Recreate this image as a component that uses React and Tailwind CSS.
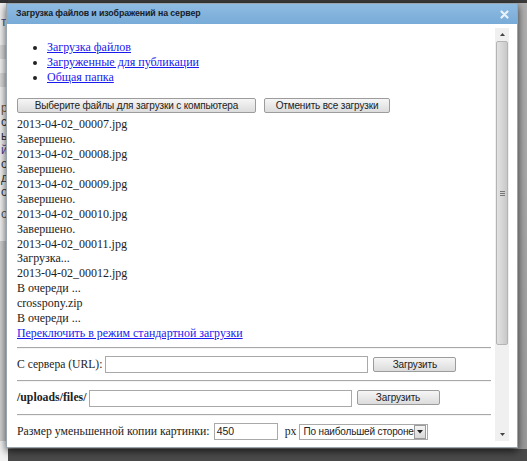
import React from "react";

const serif = { fontFamily: '"Liberation Serif", "Times New Roman", serif' };

function Btn({ w, children }) {
  return (
    <button
      className={`${w} h-[15px] shrink-0 rounded-[2px] border border-[#9c9c9c] bg-gradient-to-b from-[#f6f6f6] to-[#dcdcdc] text-[10px] tracking-[-0.15px] leading-[13px] text-[#222] font-['Liberation_Sans',Arial,sans-serif]`}
    >
      {children}
    </button>
  );
}

function Hr() {
  return <div className="h-px bg-[#a8a8a8] border-b border-[#f4f4f4] box-content" />;
}

export default function App() {
  const lines = [
    "2013-04-02_00007.jpg",
    "Завершено.",
    "2013-04-02_00008.jpg",
    "Завершено.",
    "2013-04-02_00009.jpg",
    "Завершено.",
    "2013-04-02_00010.jpg",
    "Завершено.",
    "2013-04-02_00011.jpg",
    "Загрузка...",
    "2013-04-02_00012.jpg",
    "В очереди ...",
    "crosspony.zip",
    "В очереди ...",
  ];
  return (
    <div className="relative w-[527px] h-[461px] overflow-hidden bg-[#8f8f8f]">
      {/* page behind */}
      <div className="flex h-full">
        <div className="w-[8px] h-full bg-[#f2f2f2] flex flex-col text-[12px] leading-[14px] overflow-hidden font-['Liberation_Sans',Arial,sans-serif] text-[#333]">
          <div className="h-[3px] bg-[#333] shrink-0" />
          <div className="mt-[12px] pl-[1px] text-[#4a4a9a]">т</div>
          <div className="mt-[16px] h-[14px] bg-[#dadada]" />
          <div className="mt-[14px] h-[14px] bg-[#dadada]" />
          <div className="mt-[14px] pl-[1px] text-[#7a5a20]">р</div>
          <div className="pl-[1px]">с</div>
          <div className="pl-[1px]">ь</div>
          <div className="pl-[1px] text-[#5a3a8a]">й</div>
          <div className="pl-[1px]">о</div>
          <div className="pl-[1px]">д</div>
          <div className="pl-[1px]">о</div>
          <div className="mt-[8px] pl-[1px] text-[#555]">о</div>
          <div className="mt-[20px] h-[200px] bg-[#cfcfcf]" />
        </div>
        <div className="flex-1 flex flex-col">
          <div className="h-[3px] bg-[#3a3a3a]" />
          <div className="flex-1 bg-gradient-to-b from-[#b0b0b0] to-[#9a9a9a]" />
          <div className="h-[12px] bg-[#4a4a4a]" />
        </div>
      </div>

      {/* dialog */}
      <div className="absolute left-[6px] top-[3px] w-[512px] h-[445px] bg-white border border-[#9aa4ad] shadow-[0_3px_8px_rgba(0,0,0,0.7)] flex flex-col">
        <div className="h-[20px] shrink-0 flex items-center justify-between bg-gradient-to-b from-[#8ebbe2] to-[#78abd8] pl-[9px] pr-[8px]">
          <span className="text-[8.8px] font-bold tracking-[-0.1px] text-[#16202a] font-['Liberation_Sans',Arial,sans-serif]">
            Загрузка файлов и изображений на сервер
          </span>
          <svg width="9" height="9" viewBox="0 0 9 9">
            <path d="M1.5 1.5 L7.5 7.5 M7.5 1.5 L1.5 7.5" stroke="#e8f2fb" strokeWidth="2.2" strokeLinecap="round" />
          </svg>
        </div>
        <div className="flex flex-1 min-h-0">
          <div className="flex-1 min-w-0 pl-[10px] pr-[4px] pt-[16px] overflow-hidden text-[#222]" style={serif}>
            <ul className="list-disc pl-[30px] text-[12px] leading-[14.75px]">
              <li><a className="text-[#1a1aee] underline">Загрузка файлов</a></li>
              <li><a className="text-[#1a1aee] underline">Загруженные для публикации</a></li>
              <li><a className="text-[#1a1aee] underline">Общая папка</a></li>
            </ul>
            <div className="flex gap-[8px] mt-[14px]">
              <Btn w="w-[239px]">Выберите файлы для загрузки с компьютера</Btn>
              <Btn w="w-[126px]">Отменить все загрузки</Btn>
            </div>
            <div className="mt-[4px] leading-[14.9px] text-[12px]">
              {lines.map((t, i) => (
                <div key={i}>{t}</div>
              ))}
              <div className="text-[11.9px]">
                <a className="text-[#1a1aee] underline">Переключить в режим стандартной загрузки</a>
              </div>
            </div>
            <div className="mt-[6px]"><Hr /></div>
            <div className="mt-[7px] flex items-center text-[11.6px]">
              <span>С сервера (URL):</span>
              <div className="ml-[3px] w-[263px] h-[17px] border border-[#a9a9a9] bg-white" />
              <div className="ml-[5px]"><Btn w="w-[83px]">Загрузить</Btn></div>
            </div>
            <div className="mt-[7px]"><Hr /></div>
            <div className="mt-[7px] flex items-center text-[11.8px]">
              <span className="font-bold">/uploads/files/</span>
              <div className="ml-[2px] w-[263px] h-[17px] border border-[#a9a9a9] bg-white" />
              <div className="ml-[5px]"><Btn w="w-[83px]">Загрузить</Btn></div>
            </div>
            <div className="mt-[7px]"><Hr /></div>
            <div className="mt-[7px] flex items-center text-[11.8px]">
              <span>Размер уменьшенной копии картинки:</span>
              <div className="ml-[4px] w-[64px] h-[17px] border border-[#a9a9a9] bg-white text-[10.5px] leading-[15px] pl-[2px] font-['Liberation_Sans',Arial,sans-serif]">450</div>
              <span className="ml-[7px]">px</span>
              <div className="ml-[3px] w-[129px] h-[16px] border border-[#a9a9a9] bg-white flex items-center font-['Liberation_Sans',Arial,sans-serif] text-[10px] tracking-[-0.15px]">
                <span className="flex-1 pl-[3px] whitespace-nowrap overflow-hidden">По наибольшей стороне</span>
                <div className="w-[12px] h-[14px] mr-px border border-[#9a9a9a] bg-gradient-to-b from-[#f4f4f4] to-[#d8d8d8] flex items-center justify-center">
                  <svg width="6" height="4" viewBox="0 0 6 4"><path d="M0 0 H6 L3 3.5 Z" fill="#222" /></svg>
                </div>
              </div>
            </div>
          </div>
          {/* scrollbar */}
          <div className="w-[14px] mt-[4px] mb-[6px] mr-[8px] flex flex-col bg-[#f0f0f0]">
            <div className="h-[13px] flex items-center justify-center">
              <svg width="5" height="3" viewBox="0 0 5 3"><path d="M0 3 H5 L2.5 0 Z" fill="#444" /></svg>
            </div>
            <div className="h-[304px] mx-[1px] rounded-[2px] border border-[#b4b4b4] bg-gradient-to-r from-[#e2e2e2] via-[#d6d6d6] to-[#c8c8c8] flex items-center justify-center">
              <div className="flex flex-col gap-[1px]">
                <div className="w-[5px] h-px bg-[#777]" />
                <div className="w-[5px] h-px bg-[#777]" />
                <div className="w-[5px] h-px bg-[#777]" />
              </div>
            </div>
            <div className="flex-1" />
            <div className="h-[13px] flex items-center justify-center">
              <svg width="5" height="3" viewBox="0 0 5 3"><path d="M0 0 H5 L2.5 3 Z" fill="#444" /></svg>
            </div>
          </div>
        </div>
      </div>
    </div>
  );
}
